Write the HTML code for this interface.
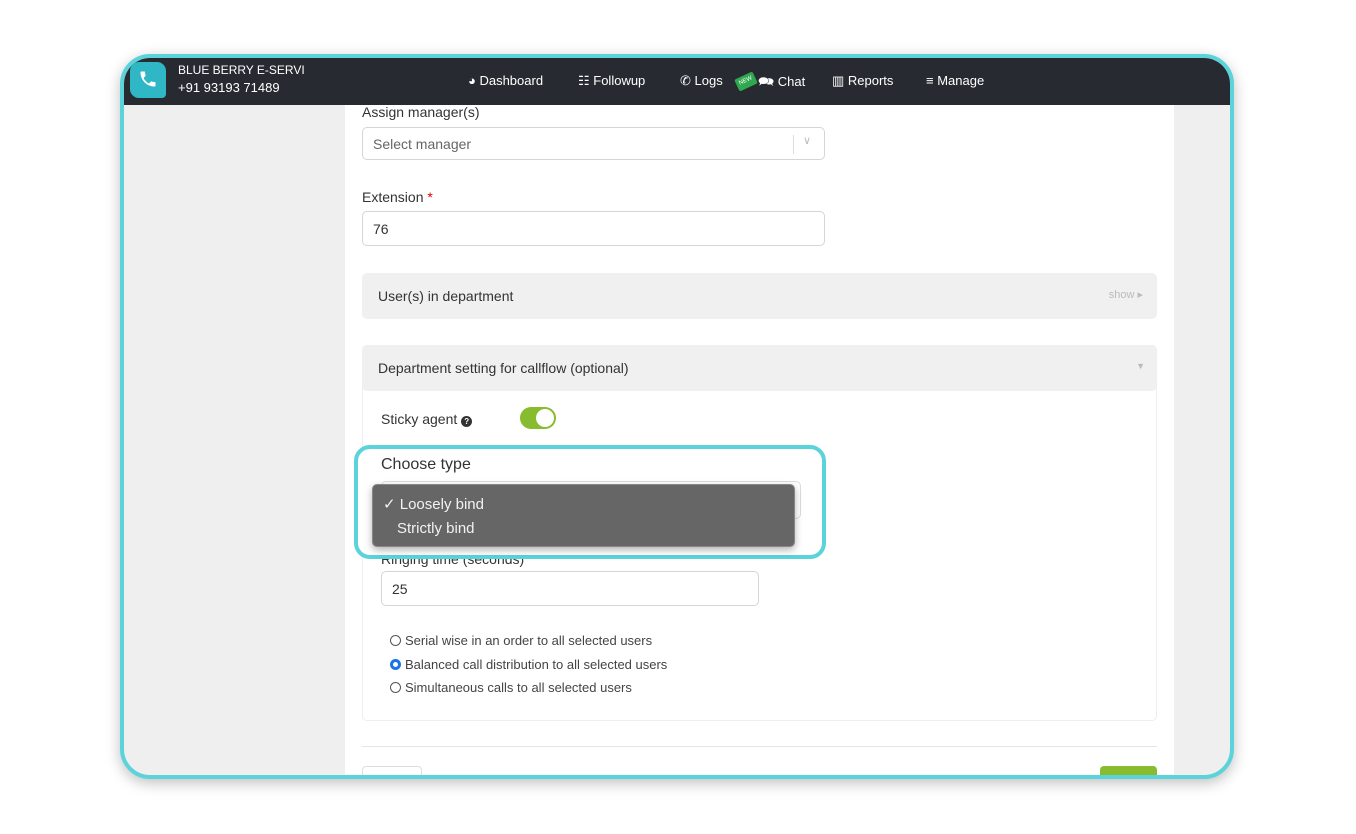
<!DOCTYPE html>
<html><head><meta charset="utf-8"><style>
*{box-sizing:border-box;margin:0;padding:0}
body{width:1356px;height:834px;background:#fff;font-family:"Liberation Sans",sans-serif;position:relative;overflow:hidden;color:#333}
.frame{position:absolute;left:120px;top:54px;width:1114px;height:725px;border:4px solid #5ad3da;border-radius:30px;overflow:hidden;background:#efefef;box-shadow:0 4px 14px rgba(0,0,0,.25)}
.nav{position:absolute;left:0;top:0;width:100%;height:47px;background:#272a31;color:#fff;font-size:13px}
.a{position:absolute}
.panel{position:absolute;left:221px;top:43px;width:829px;height:690px;background:#fff}
.lbl{font-size:14px;color:#333}
.inp{border:1px solid #d5d5d5;border-radius:5px;background:#fff;font-size:14px}
.bar{background:#f0f0f0;border-radius:5px;font-size:14px;color:#333}
.radio{display:inline-block;width:11px;height:11px;border:1px solid #555;border-radius:50%;vertical-align:-1px;margin-right:4px}
</style></head><body>
<div class="frame">
 <div class="panel">
  <div class="a lbl" style="left:17px;top:3px">Assign manager(s)</div>
  <div class="a inp" style="left:17px;top:26px;width:463px;height:33px;color:#666;padding:8px 10px">Select manager<span class="a" style="left:430px;top:7px;width:1px;height:19px;background:#ddd"></span><span class="a" style="left:440px;top:6px;color:#bbb;font-size:11px">∨</span></div>
  <div class="a lbl" style="left:17px;top:88px">Extension <span style="color:#d00">*</span></div>
  <div class="a inp" style="left:17px;top:110px;width:463px;height:35px;padding:9px 10px">76</div>
  <div class="a bar" style="left:17px;top:172px;width:795px;height:46px;padding:15px 16px">User(s) in department<span class="a" style="right:14px;top:15px;font-size:11px;color:#bbb">show ▸</span></div>
  <div class="a" style="left:17px;top:244px;width:795px;height:376px;border:1px solid #eee;border-radius:5px"></div>
  <div class="a bar" style="left:17px;top:244px;width:795px;height:46px;padding:15px 16px">Department setting for callflow (optional)<span class="a" style="right:12px;top:16px;font-size:9px;color:#bbb">▼</span></div>
  <div class="a lbl" style="left:36px;top:310px">Sticky agent <span style="display:inline-block;width:11px;height:11px;border-radius:50%;background:#333;color:#fff;font-size:8px;text-align:center;line-height:11px;font-weight:bold">?</span></div>
  <div class="a" style="left:175px;top:306px;width:36px;height:22px;background:#86bc2e;border-radius:11px"><div class="a" style="right:2px;top:2px;width:18px;height:18px;background:#fff;border-radius:50%"></div></div>
  <div class="a lbl" style="left:36px;top:450px">Ringing time (seconds)</div>
  <div class="a inp" style="left:36px;top:470px;width:378px;height:35px;padding:9px 10px">25</div>
  <div class="a" style="left:45px;top:528px;font-size:13px;color:#444;line-height:23.5px"><div><span class="radio"></span>Serial wise in an order to all selected users</div><div><span class="radio" style="border:3px solid #1a73e8;background:#fff"></span>Balanced call distribution to all selected users</div><div><span class="radio"></span>Simultaneous calls to all selected users</div></div>
  <div class="a" style="left:17px;top:645px;width:795px;height:1px;background:#e5e5e5"></div>
  <div class="a" style="left:17px;top:665px;width:60px;height:30px;border:1px solid #ddd;border-radius:4px"></div>
  <div class="a" style="left:755px;top:665px;width:57px;height:30px;background:#86bc2e;border-radius:4px"></div>
 </div>
 <div class="nav">
  <div class="a" style="left:6px;top:4px;width:36px;height:36px;background:#2fb7c6;border-radius:9px 9px 4px 9px"></div>
  <svg class="a" style="left:14px;top:11px" width="20" height="20" viewBox="0 0 24 24"><path d="M6.6 10.8c1.4 2.8 3.8 5.1 6.6 6.6l2.2-2.2c.3-.3.7-.4 1-.2 1.1.4 2.3.6 3.6.6.6 0 1 .4 1 1V20c0 .6-.4 1-1 1C10.6 21 3 13.4 3 4c0-.6.4-1 1-1h3.5c.6 0 1 .4 1 1 0 1.3.2 2.5.6 3.6.1.3 0 .7-.2 1z" fill="#fff"/></svg>
  <div class="a" style="left:54px;top:5px;font-size:12px">BLUE BERRY E-SERVI</div>
  <div class="a" style="left:54px;top:22px;font-size:13px">+91 93193 71489</div>
  <div class="a" style="left:344px;top:15px">◕ Dashboard</div>
  <div class="a" style="left:454px;top:15px">☷ Followup</div>
  <div class="a" style="left:556px;top:15px">✆ Logs</div>
  <div class="a" style="left:612px;top:17px;width:20px;height:13px;background:#2fa84f;transform:rotate(-25deg);font-size:6px;color:#fff;text-align:center;line-height:13px;border-radius:2px">NEW</div>
  <div class="a" style="left:634px;top:15px">🗪 Chat</div>
  <div class="a" style="left:708px;top:15px">▥ Reports</div>
  <div class="a" style="left:802px;top:15px">≡ Manage</div>
 </div>
</div>
<div class="a" style="left:354px;top:445px;width:472px;height:114px;border:4px solid #5ad3da;border-radius:16px;background:#fff"></div>
<div class="a" style="left:381px;top:456px;font-size:16px;color:#333">Choose type</div>
<div class="a" style="left:381px;top:481px;width:420px;height:38px;border:1px solid #ddd;border-radius:5px"></div>
<div class="a" style="left:372px;top:484px;width:423px;height:63px;background:#666;border:1px solid #888;border-radius:5px;box-shadow:0 3px 8px rgba(0,0,0,.3);color:#f2f2f2;font-size:15px">
 <div class="a" style="left:10px;top:10px">✓ Loosely bind</div>
 <div class="a" style="left:24px;top:35px">Strictly bind</div>
</div>
</body></html>
